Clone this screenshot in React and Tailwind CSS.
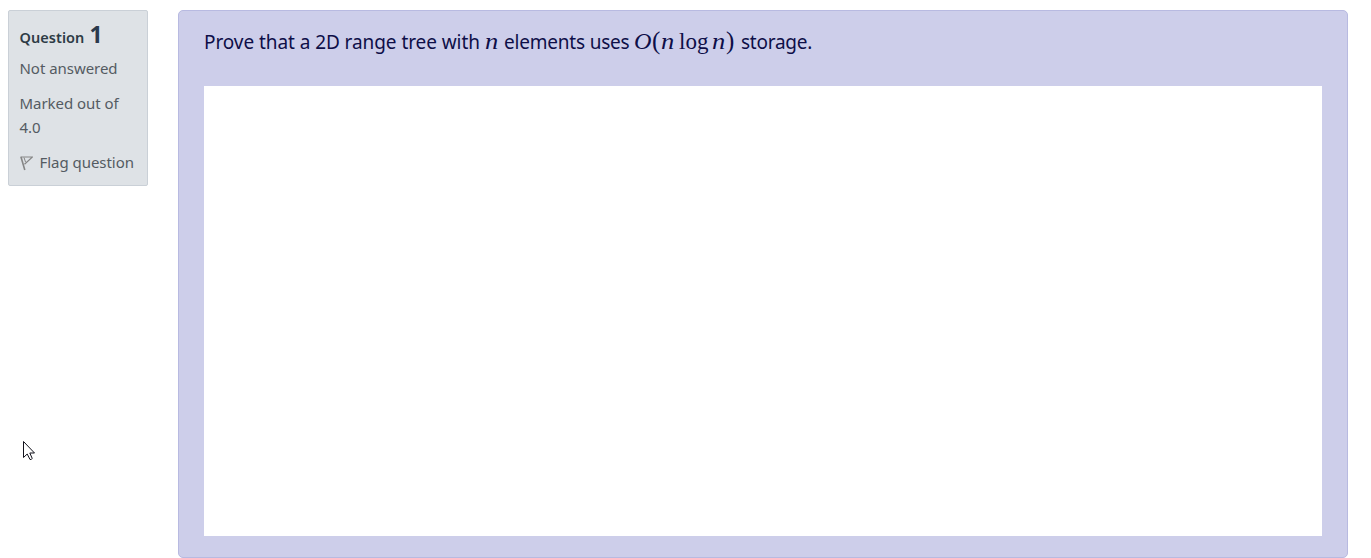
export default function App() {
  return (
    <div className="relative flex h-[558px] w-[1371px] items-start gap-[30px] overflow-hidden bg-white pt-[10px] pl-2 font-['Noto_Sans','Open_Sans',sans-serif]">
      <aside className="h-[176px] w-[140px] shrink-0 rounded-[2px] border border-[#cad0d7] bg-[#dee2e6] pl-[10.5px] text-[15px] tracking-[-0.04px] text-[#545b62]">
        <h3 className="mt-[8px] flex h-[30px] items-baseline gap-[5px] leading-[30px] font-semibold whitespace-nowrap text-[#2d3b45]">
          <span className="text-[14.5px] tracking-[0.05px]">Question</span>
          <span className="text-[23px] font-bold text-[#2b3a4c]">1</span>
        </h3>
        <div className="mt-[7px] h-6 leading-6 whitespace-nowrap">Not answered</div>
        <div className="mt-[11px] h-12 leading-6">
          <div className="whitespace-nowrap">Marked out of</div>
          <div>4.0</div>
        </div>
        <div className="mt-[11px] flex h-6 items-center gap-[7px] leading-6 whitespace-nowrap">
          <svg className="mt-[2px] h-[15px] w-[13px] shrink-0" viewBox="0 0 13 15" fill="none" stroke="#858585">
            <path d="M1 1 L4.8 14" strokeWidth="1.6" />
            <path d="M0.5 1 H12.5 L4.5 8.2" strokeWidth="1.2" />
            <path d="M4 1.5 L5.5 6" strokeWidth="1" />
          </svg>
          <span>Flag question</span>
        </div>
      </aside>
      <main className="h-[548px] w-[1170px] shrink-0 rounded-[5px] border border-[#b8bae1] bg-[#cdceea] px-[25px]">
        <p className="flex h-[75px] items-baseline pt-[15px] text-[19px] leading-[30px] whitespace-nowrap text-[#0e0e48]">
          <span className="w-[281px] tracking-[-0.07px]">Prove that a 2D range tree with</span>
          <i className="inline-block w-[19px] origin-left scale-x-115 font-['Liberation_Serif',serif] text-[23px]">n</i>
          <span className="w-[130px] tracking-[-0.2px]">elements uses</span>
          <span className="flex w-[107px] items-baseline font-['Liberation_Serif',serif] text-[23px]">
            <i className="inline-block w-[18px] origin-left scale-x-105">O</i>
            <span className="w-[8.5px] text-[25px]">(</span>
            <i className="inline-block w-[18.5px] origin-left scale-x-115">n</i>
            <span className="w-[33px]">log</span>
            <i className="inline-block w-[14px] origin-left scale-x-115">n</i>
            <span className="text-[25px]">)</span>
          </span>
          <span className="tracking-[-0.25px]">storage.</span>
        </p>
        <div className="h-[450px] w-[1118px] bg-white" />
      </main>
      <svg className="absolute top-[440px] left-[22px] h-[22px] w-[15px]" viewBox="0 0 15 22" fill="white" stroke="#11111b">
        <path d="M1.5 1.5 V17.5 L5.2 14 L8 19.5 Q9.5 20 10.2 18.3 L7.8 13 H12.5 Z" strokeWidth="1" />
      </svg>
    </div>
  );
}
